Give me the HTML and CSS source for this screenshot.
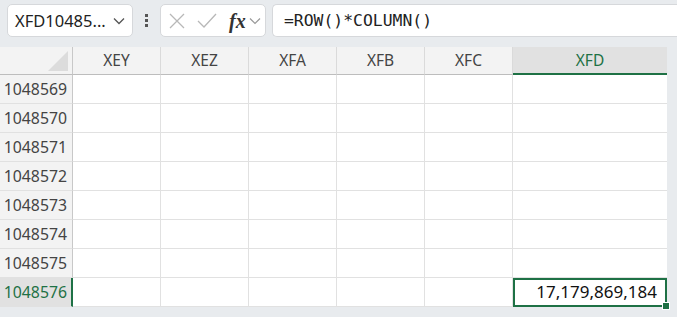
FILE: index.html
```html
<!DOCTYPE html>
<html lang="en">
<head>
  <meta charset="UTF-8">
  <title>Sheet</title>
  <link rel="stylesheet" href="styles.css">
</head>
<body>
  <!-- Formula bar -->
  <div class="toolbar">
    <div class="namebox">
      <span class="name">XFD10485...</span>
      <svg class="chev" width="12" height="8" viewBox="0 0 12 8"><path d="M1 1.5 L6 6.5 L11 1.5" fill="none" stroke="#555" stroke-width="1.3"/></svg>
    </div>
    <div class="dots"><span></span><span></span><span></span></div>
    <div class="buttons">
      <svg width="18" height="18" viewBox="0 0 18 18"><path d="M2 2 L16 16 M16 2 L2 16" stroke="#b8b8b8" stroke-width="1.3"/></svg>
      <svg width="22" height="18" viewBox="0 0 22 18"><path d="M2 9 L8 15 L20 2" fill="none" stroke="#b8b8b8" stroke-width="1.3"/></svg>
      <span class="fx">fx</span>
      <svg class="chev" width="12" height="8" viewBox="0 0 12 8"><path d="M1 1.5 L6 6.5 L11 1.5" fill="none" stroke="#999" stroke-width="1.2"/></svg>
    </div>
    <div class="formula">=ROW()*COLUMN()</div>
  </div>

  <!-- Grid -->
  <div class="sheet">
    <div class="corner"><span class="tri"></span></div>
    <div class="colhead">XEY</div>
    <div class="colhead">XEZ</div>
    <div class="colhead">XFA</div>
    <div class="colhead">XFB</div>
    <div class="colhead">XFC</div>
    <div class="colhead active">XFD</div>

    <div class="rowhead">1048569</div><div class="cell"></div><div class="cell"></div><div class="cell"></div><div class="cell"></div><div class="cell"></div><div class="cell"></div>
    <div class="rowhead">1048570</div><div class="cell"></div><div class="cell"></div><div class="cell"></div><div class="cell"></div><div class="cell"></div><div class="cell"></div>
    <div class="rowhead">1048571</div><div class="cell"></div><div class="cell"></div><div class="cell"></div><div class="cell"></div><div class="cell"></div><div class="cell"></div>
    <div class="rowhead">1048572</div><div class="cell"></div><div class="cell"></div><div class="cell"></div><div class="cell"></div><div class="cell"></div><div class="cell"></div>
    <div class="rowhead">1048573</div><div class="cell"></div><div class="cell"></div><div class="cell"></div><div class="cell"></div><div class="cell"></div><div class="cell"></div>
    <div class="rowhead">1048574</div><div class="cell"></div><div class="cell"></div><div class="cell"></div><div class="cell"></div><div class="cell"></div><div class="cell"></div>
    <div class="rowhead">1048575</div><div class="cell"></div><div class="cell"></div><div class="cell"></div><div class="cell"></div><div class="cell"></div><div class="cell"></div>
    <div class="rowhead active">1048576</div><div class="cell"></div><div class="cell"></div><div class="cell"></div><div class="cell"></div><div class="cell"></div><div class="cell selected">17,179,869,184</div>
  </div>
</body>
</html>
```

FILE: styles.css
```css
/* General */
body {
  margin: 0;
  background-color: #e8ebee;
  font-family: "Segoe UI", "Noto Sans", sans-serif;
  color: #333;
  height: 317px;
  overflow: hidden;
}

/* Formula bar */
.toolbar {
  display: flex;
  align-items: center;
  height: 33px;
  padding: 4px 0 10px 7px;
}

.namebox, .buttons, .formula {
  box-sizing: border-box;
  height: 33px;
  background: white;
  border: 1px solid #d6d8db;
  border-radius: 5px;
  display: flex;
  align-items: center;
}

.namebox {
  width: 126px;
  padding: 0 7px 0 7px;
  justify-content: space-between;
}

.name {
  font-size: 16.5px;
  color: #222;
}

.dots {
  width: 27px;
  display: flex;
  flex-direction: column;
  align-items: center;
  gap: 2px;
}

.dots span {
  width: 3px;
  height: 3px;
  background: #555;
}

.buttons {
  width: 106px;
  margin-right: 6px;
  padding: 0 4px 0 7px;
  gap: 10px;
}

.fx {
  font-family: "Liberation Serif", serif;
  font-style: italic;
  font-weight: bold;
  font-size: 20px;
  color: #333;
  margin-left: 1px;
  margin-right: -7px;
  line-height: 1;
}

.formula {
  flex: 1;
  border-right: none;
  border-radius: 5px 0 0 5px;
  padding-left: 11px;
  font-family: "DejaVu Sans Mono", monospace;
  font-size: 16.4px;
  color: #222;
}

/* Grid */
.sheet {
  display: grid;
  grid-template-columns: 73px repeat(5, 88px) 154px;
  grid-template-rows: 28px repeat(8, 29px);
  width: 667px;
  background: white;
}

.sheet > div {
  box-sizing: border-box;
}

.corner {
  background: #f3f3f3;
  border-right: 1px solid #c8c8c8;
  border-bottom: 1px solid #bdbdbd;
  position: relative;
}

.tri {
  position: absolute;
  right: 4px;
  bottom: 3px;
  width: 0;
  height: 0;
  border-left: 20px solid transparent;
  border-bottom: 20px solid #dcdcdc;
}

.colhead {
  background: #f3f3f3;
  border-right: 1px solid #dadada;
  border-bottom: 1px solid #bdbdbd;
  font-size: 15.5px;
  color: #444;
  text-align: center;
  line-height: 27px;
}

.colhead.active {
  background: #e1e1e1;
  color: #1e7145;
  border-right: none;
  border-bottom: 2px solid #1e7145;
}

.rowhead {
  background: #f3f3f3;
  border-right: 1px solid #c8c8c8;
  border-bottom: 1px solid #e1e1e1;
  font-size: 15.8px;
  color: #444;
  text-align: right;
  padding-right: 5px;
  line-height: 29px;
}

.rowhead.active {
  background: #e1e1e1;
  color: #1e7145;
  border-right: 2px solid #1e7145;
  padding-right: 4px;
}

.cell {
  border-right: 1px solid #e1e1e1;
  border-bottom: 1px solid #e1e1e1;
}

.cell:nth-child(7n) {
  border-right: none;
}

.cell.selected {
  position: relative;
  text-align: right;
  padding-right: 10px;
  font-size: 17px;
  color: #111;
  line-height: 28px;
  border-bottom: none;
}

.cell.selected::after {
  content: "";
  position: absolute;
  left: 0;
  top: 0;
  right: 0;
  bottom: 0;
  border: 2px solid #1e7145;
}

.cell.selected::before {
  content: "";
  position: absolute;
  right: -3px;
  bottom: -3px;
  width: 6px;
  height: 6px;
  background: #1e7145;
  border: 1px solid white;
  z-index: 1;
}
```
